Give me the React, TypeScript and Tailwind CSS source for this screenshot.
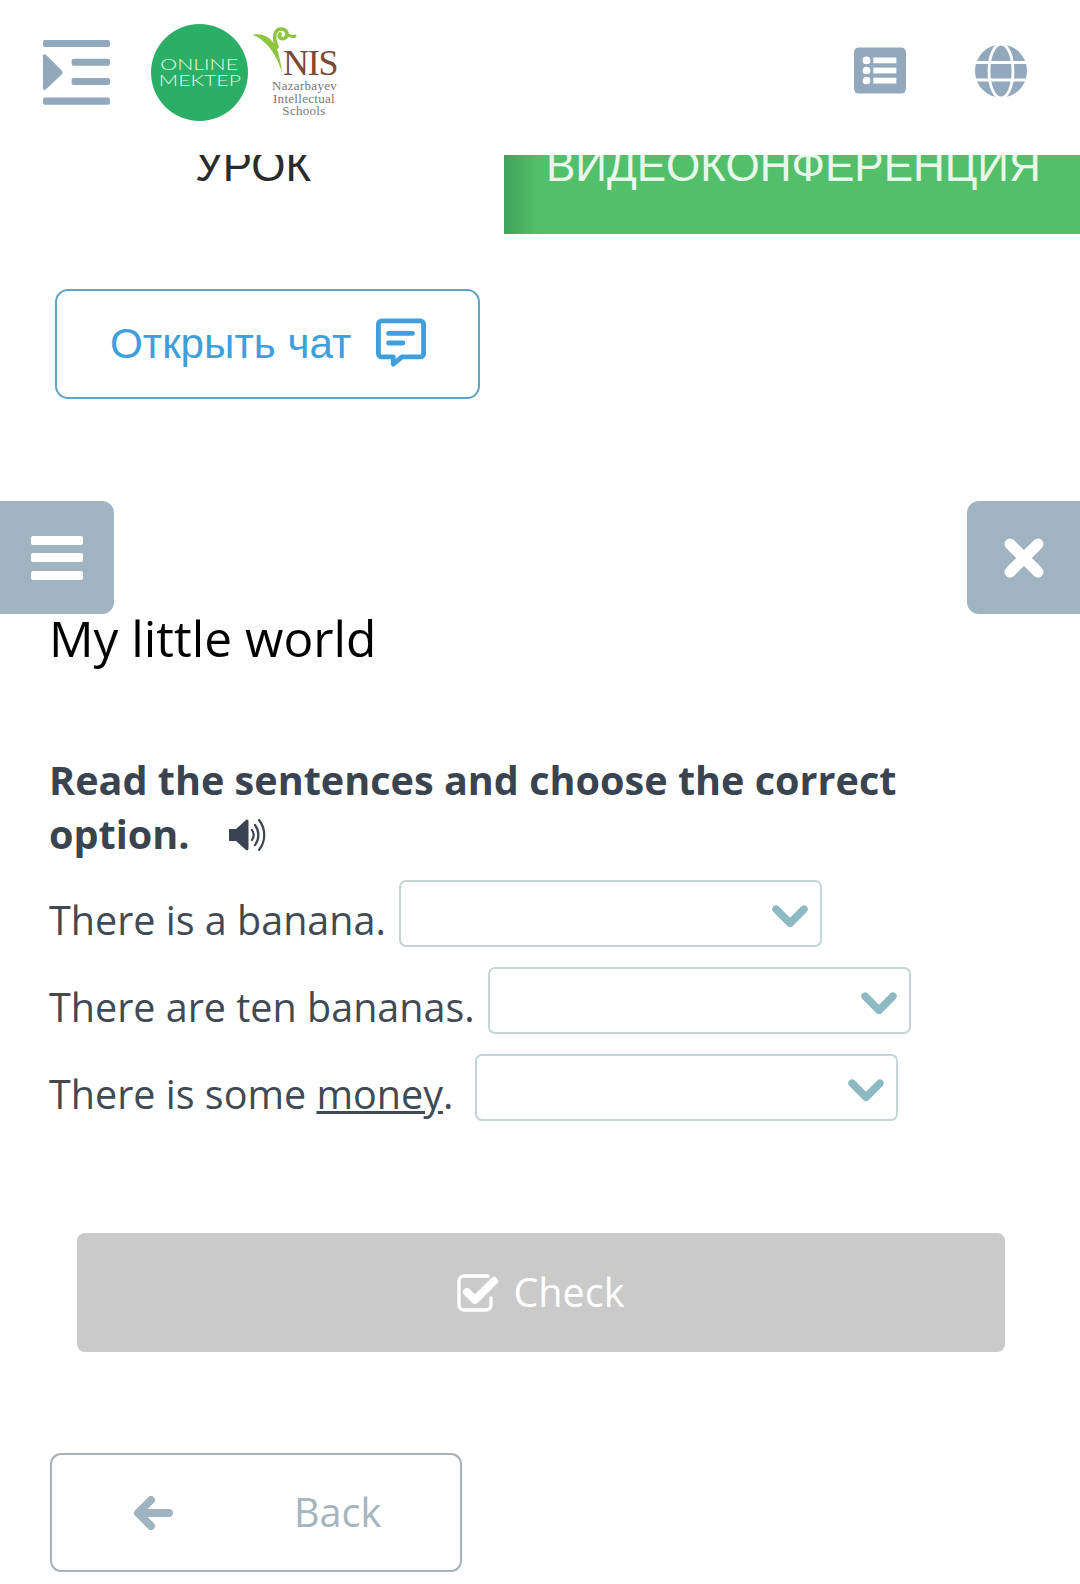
const OutdentIcon = () => (
  <svg width="67" height="65" viewBox="0 0 68 66" fill="#92a8bc">
    <rect x="0" y="0" width="68" height="7.2" rx="2" />
    <rect x="29" y="19" width="39" height="7.2" rx="2" />
    <rect x="29" y="38.5" width="39" height="7.2" rx="2" />
    <rect x="0" y="58.5" width="68" height="7.2" rx="2" />
    <path d="M0 16 C0 14 2 14 3 15 L19 31 C20 32.5 20 33.5 19 35 L3 50 C2 51 0 51 0 49 Z" />
  </svg>
);

const ListIcon = () => (
  <svg width="52" height="47" viewBox="0 0 54 48">
    <rect width="54" height="48" rx="5" fill="#92a8bc" />
    <g fill="#fff">
      <circle cx="13" cy="13.5" r="4" />
      <circle cx="13" cy="24" r="4" />
      <circle cx="13" cy="34.5" r="4" />
      <rect x="20" y="10.5" width="24" height="6" />
      <rect x="20" y="21" width="24" height="6" />
      <rect x="20" y="31.5" width="24" height="6" />
    </g>
  </svg>
);

const GlobeIcon = () => (
  <svg width="52" height="54" viewBox="0 0 52 54" fill="none">
    <ellipse cx="26" cy="27" rx="26" ry="26.5" fill="#92a8bc" />
    <g stroke="#fff" strokeWidth="2.8">
      <ellipse cx="26" cy="27" rx="12" ry="27" />
      <path d="M0 18.5 H52 M0 36 H52" />
    </g>
  </svg>
);

const ChatIcon = () => (
  <svg width="50" height="50" viewBox="0 0 52 52" fill="none">
    <path
      d="M6 3 H46 a3.5 3.5 0 0 1 3.5 3.5 V37 a3.5 3.5 0 0 1 -3.5 3.5 H27 L18 48 V40.5 H6 a3.5 3.5 0 0 1 -3.5 -3.5 V6.5 A3.5 3.5 0 0 1 6 3 Z"
      stroke="#3f9fdc"
      strokeWidth="5"
      strokeLinejoin="round"
    />
    <path d="M13 16 H38 M13 26 H28" stroke="#3f9fdc" strokeWidth="5" strokeLinecap="round" />
  </svg>
);

const SpeakerIcon = () => (
  <svg width="38" height="34" viewBox="0 0 38 34" fill="none">
    <path d="M0 11 H7 L17 2 C18.5 1 19.5 2 19.5 3.5 V30.5 C19.5 32 18.5 33 17 32 L7 23 H0 Z" fill="#3a4451" />
    <g stroke="#3a4451" strokeWidth="2.2" strokeLinecap="round">
      <path d="M23 12 C25 15 25 19 23 22" />
      <path d="M26 7 C30.5 13 30.5 21 26 27" />
      <path d="M30 2 C37 11 37 23 30 32" />
    </g>
  </svg>
);

const BarsIcon = () => (
  <svg width="52" height="44" viewBox="0 0 52 44" fill="#fff">
    <rect x="0" y="0" width="52" height="9" rx="2" />
    <rect x="0" y="17" width="52" height="9" rx="2" />
    <rect x="0" y="35" width="52" height="9" rx="2" />
  </svg>
);

const CloseIcon = () => (
  <svg width="42" height="42" viewBox="0 0 42 42" fill="none">
    <path d="M7 7 L35 35 M35 7 L7 35" stroke="#fff" strokeWidth="11" strokeLinecap="round" />
  </svg>
);

const Chevron = () => (
  <svg width="36" height="23" viewBox="0 0 37 24" fill="none">
    <path d="M4 4.5 L18.5 19 L33 4.5" stroke="#8db9c2" strokeWidth="8" strokeLinecap="round" strokeLinejoin="round" />
  </svg>
);

const CheckBoxIcon = () => (
  <svg width="42" height="38" viewBox="0 0 42 38" fill="none">
    <path d="M31 2 H7 a5 5 0 0 0 -5 5 V31 a5 5 0 0 0 5 5 H29 a5 5 0 0 0 5 -5 V24" stroke="#fff" strokeWidth="3.4" strokeLinecap="round" />
    <path d="M10 18 L18 26 L37 7" stroke="#fff" strokeWidth="8" strokeLinecap="round" strokeLinejoin="round" />
  </svg>
);

const BackArrow = () => (
  <svg width="40" height="34" viewBox="0 0 40 34" fill="none">
    <path d="M18 4 L5 17 L18 30 M6 17 H36" stroke="#9fb3c1" strokeWidth="8" strokeLinecap="round" strokeLinejoin="round" />
  </svg>
);

const NisLogo = () => (
  <div className="relative w-[90px] h-[96px] font-['Liberation_Serif',serif]">
    <svg className="absolute left-0 top-0" width="48" height="48" viewBox="0 0 48 48" fill="none">
      <path d="M2 8 C12 5 22 10 27 22 C29 28 31 36 32 46 C28 32 22 22 14 15 C10 11 6 9 2 8 Z" fill="#8cc63f" />
      <path d="M27 20 C22 8 26 2 31 2 C37 2 39 8 35 11 C31 13 28 10 30 7" stroke="#8cc63f" strokeWidth="3.6" strokeLinecap="round" />
      <path d="M37 7 C39 9 42 10 45 9" stroke="#8cc63f" strokeWidth="3" strokeLinecap="round" />
    </svg>
    <div className="absolute left-[33px] top-[19px] text-[36px] leading-[34px] text-[#7a4a35] tracking-[-1.2px]">NIS</div>
    <div className="absolute left-[22px] top-[53px] w-[64px] text-center text-[13px] leading-[12.6px] text-[#777777] tracking-[0.3px] whitespace-nowrap">
      Nazarbayev
      <br />
      Intellectual
      <br />
      Schools
    </div>
  </div>
);

const Header = () => (
  <header className="relative z-10 h-[155px] bg-white flex items-start">
    <div className="ml-[43px] mt-[40px]">
      <OutdentIcon />
    </div>
    <div className="ml-[41px] mt-[24px] w-[97px] h-[97px] rounded-full bg-[#2bae66] flex flex-col items-center justify-center font-['Lato',sans-serif] font-light text-[#e3fbe8] text-[16px] leading-[15.5px] pb-[2px]">
      <span className="scale-x-[1.33]">ONLINE</span>
      <span className="scale-x-[1.33]">MEKTEP</span>
    </div>
    <div className="mt-[27px] ml-[2px]">
      <NisLogo />
    </div>
    <div className="ml-auto mt-[47px] flex items-start">
      <ListIcon />
      <div className="ml-[69px] mr-[53px] -mt-[3px]">
        <GlobeIcon />
      </div>
    </div>
  </header>
);

const Tabs = () => (
  <div className="flex h-[79px] font-['Liberation_Sans',sans-serif] text-[44px] leading-[50px]">
    <div className="w-[504px] text-center text-[#2b2b2b]">
      <div className="-mt-[14px] relative pl-[2px]">УРОК</div>
    </div>
    <div className="flex-1 bg-linear-to-r from-[#3ea45a] to-[#52c06a] to-[6%] text-[#e8f8ea] pl-[42px]">
      <div className="-mt-[14px]">ВИДЕОКОНФЕРЕНЦИЯ</div>
    </div>
  </div>
);

const SelectBox = () => (
  <div className="w-[423px] h-[67px] -mt-[13px] border-2 border-[#c5d5d6] rounded-[7px] flex items-center justify-end pr-[12px]">
    <span className="mt-[7px]">
      <Chevron />
    </span>
  </div>
);

const Row = ({ children, gap = 'mr-[13px]' }: { children: React.ReactNode; gap?: string }) => (
  <div className="flex items-center h-[87px] text-[39.5px] text-[#3f4a55]">
    <span className={`${gap} mt-[2px] whitespace-nowrap`}>{children}</span>
    <SelectBox />
  </div>
);

export default function App() {
  return (
    <div className="w-[1080px] h-[1584px] overflow-hidden bg-white font-['Open_Sans',sans-serif]">
      <Header />
      <Tabs />

      <button className="ml-[55px] mt-[55px] w-[425px] h-[110px] border-2 border-[#5fa5c6] rounded-[13px] flex items-center pl-[53px] font-['Liberation_Sans',sans-serif] text-[42.2px] text-[#3f9fdc]">
        Открыть чат
        <span className="ml-[25px] -mt-[2px]">
          <ChatIcon />
        </span>
      </button>

      <div className="mt-[102px] h-[113px] flex justify-between">
        <div className="w-[114px] bg-[#9fb3c1] rounded-r-[12px] flex items-center justify-center">
          <BarsIcon />
        </div>
        <div className="w-[113px] bg-[#9fb3c1] rounded-l-[12px] flex items-center justify-center">
          <CloseIcon />
        </div>
      </div>

      <div className="pl-[49px] pr-[50px]">
        <h1 className="-mt-[2px] text-[49.6px] leading-[52px] text-black">My little world</h1>

        <h2 className="mt-[89px] w-[950px] text-[39.6px] leading-[54px] font-bold text-[#3a4451]">
          Read the sentences and choose the correct
          <br />
          option.
          <span className="inline-block ml-[39px] align-[-3px]">
            <SpeakerIcon />
          </span>
        </h2>

        <div className="mt-[15px]">
          <Row>There is a banana.</Row>
          <Row>There are ten bananas.</Row>
          <Row gap="mr-[22px]">
            There is some <span className="underline">money</span>.
          </Row>
        </div>
      </div>

      <button className="ml-[77px] mt-[96px] w-[928px] h-[119px] bg-[#cacaca] rounded-[8px] flex items-center justify-center text-[39.6px] text-white">
        <span className="mr-[14px]">
          <CheckBoxIcon />
        </span>
        Check
      </button>

      <button className="ml-[50px] mt-[101px] w-[412px] h-[119px] border-2 border-[#a5b3b9] rounded-[11px] flex items-center pl-[81px] text-[39.6px] text-[#a5b5bf]">
        <BackArrow />
        <span className="ml-[121px]">Back</span>
      </button>
    </div>
  );
}
